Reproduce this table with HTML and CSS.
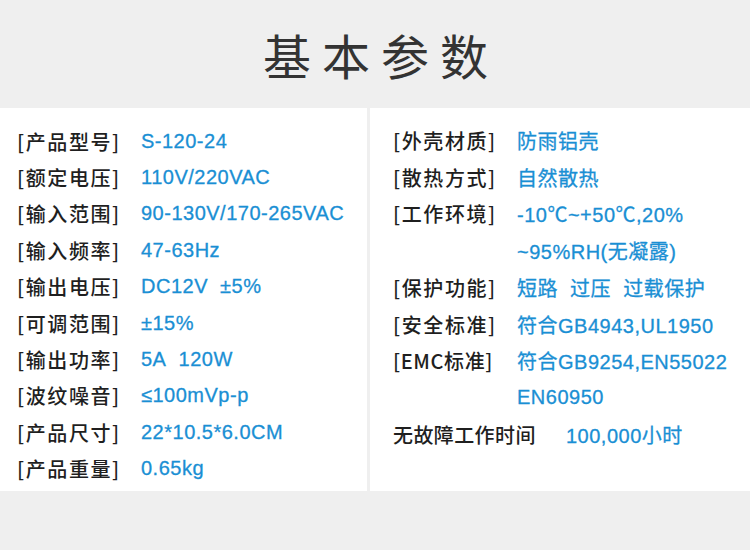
FILE: index.html
```html
<!DOCTYPE html>
<html lang="zh">
<head>
<meta charset="utf-8">
<title>基本参数</title>
<link rel="stylesheet" href="styles.css">
</head>
<body>
<header class="head">
  <h1 class="title">基本参数</h1>
</header>
<main class="panel">
  <section class="col col-left">
    <div class="row"><span class="label">[产品型号]</span><span class="val">S-120-24</span></div>
    <div class="row"><span class="label">[额定电压]</span><span class="val">110V/220VAC</span></div>
    <div class="row"><span class="label">[输入范围]</span><span class="val">90-130V/170-265VAC</span></div>
    <div class="row"><span class="label">[输入频率]</span><span class="val">47-63Hz</span></div>
    <div class="row"><span class="label">[输出电压]</span><span class="val">DC12V&nbsp; ±5%</span></div>
    <div class="row"><span class="label">[可调范围]</span><span class="val">±15%</span></div>
    <div class="row"><span class="label">[输出功率]</span><span class="val">5A&nbsp; 120W</span></div>
    <div class="row"><span class="label">[波纹噪音]</span><span class="val">≤100mVp-p</span></div>
    <div class="row"><span class="label">[产品尺寸]</span><span class="val">22*10.5*6.0CM</span></div>
    <div class="row"><span class="label">[产品重量]</span><span class="val">0.65kg</span></div>
  </section>
  <section class="col col-right">
    <div class="row"><span class="label">[外壳材质]</span><span class="val">防雨铝壳</span></div>
    <div class="row"><span class="label">[散热方式]</span><span class="val">自然散热</span></div>
    <div class="row"><span class="label">[工作环境]</span><span class="val">-10℃~+50℃,20%</span></div>
    <div class="row"><span class="label"></span><span class="val">~95%RH(无凝露)</span></div>
    <div class="row"><span class="label">[保护功能]</span><span class="val">短路&nbsp; 过压&nbsp; 过载保护</span></div>
    <div class="row"><span class="label">[安全标准]</span><span class="val">符合GB4943,UL1950</span></div>
    <div class="row"><span class="label label-tight">[EMC标准]</span><span class="val">符合GB9254,EN55022</span></div>
    <div class="row"><span class="label"></span><span class="val">EN60950</span></div>
    <div class="row"><span class="label label-wide">无故障工作时间</span><span class="val">100,000小时</span></div>
  </section>
</main>
</body>
</html>
```
FILE: styles.css
```css
html, body {
  margin: 0;
  padding: 0;
}
body {
  width: 750px;
  height: 550px;
  background: #efefef;
  font-family: "Liberation Sans", "Noto Sans CJK SC", sans-serif;
  overflow: hidden;
}
.head {
  height: 108px;
  display: flex;
  align-items: center;
  justify-content: center;
}
.title {
  margin: 0;
  padding-left: 12px;
  font-family: "Noto Sans CJK SC", sans-serif;
  font-weight: 400;
  font-size: 48px;
  letter-spacing: 11px;
  color: #333;
  line-height: 1;
}
.panel {
  display: flex;
  gap: 3px;
  height: 383px;
}
.col {
  background: #fff;
  box-sizing: border-box;
  padding-top: 15px;
}
.col-left {
  width: 367px;
  padding-left: 17px;
}
.col-right {
  flex: 1;
  padding-left: 23px;
  padding-top: 14px;
}
.row {
  display: flex;
  align-items: center;
  height: 36.4px;
  white-space: nowrap;
}
.col-right .row {
  height: 36.75px;
}
.label {
  width: 124px;
  flex: none;
  font-family: "Noto Sans CJK SC", sans-serif;
  font-weight: 500;
  font-size: 20px;
  letter-spacing: 1.6px;
  color: #1f1f1f;
}
.label-tight {
  letter-spacing: 0.6px;
}
.label-wide {
  width: 173px;
  letter-spacing: 0.4px;
}
.val {
  font-family: "Liberation Sans", "Noto Sans CJK SC", sans-serif;
  font-size: 20px;
  letter-spacing: 0.5px;
  color: #1a8fd4;
  -webkit-text-stroke: 0.3px #1a8fd4;
}
```
